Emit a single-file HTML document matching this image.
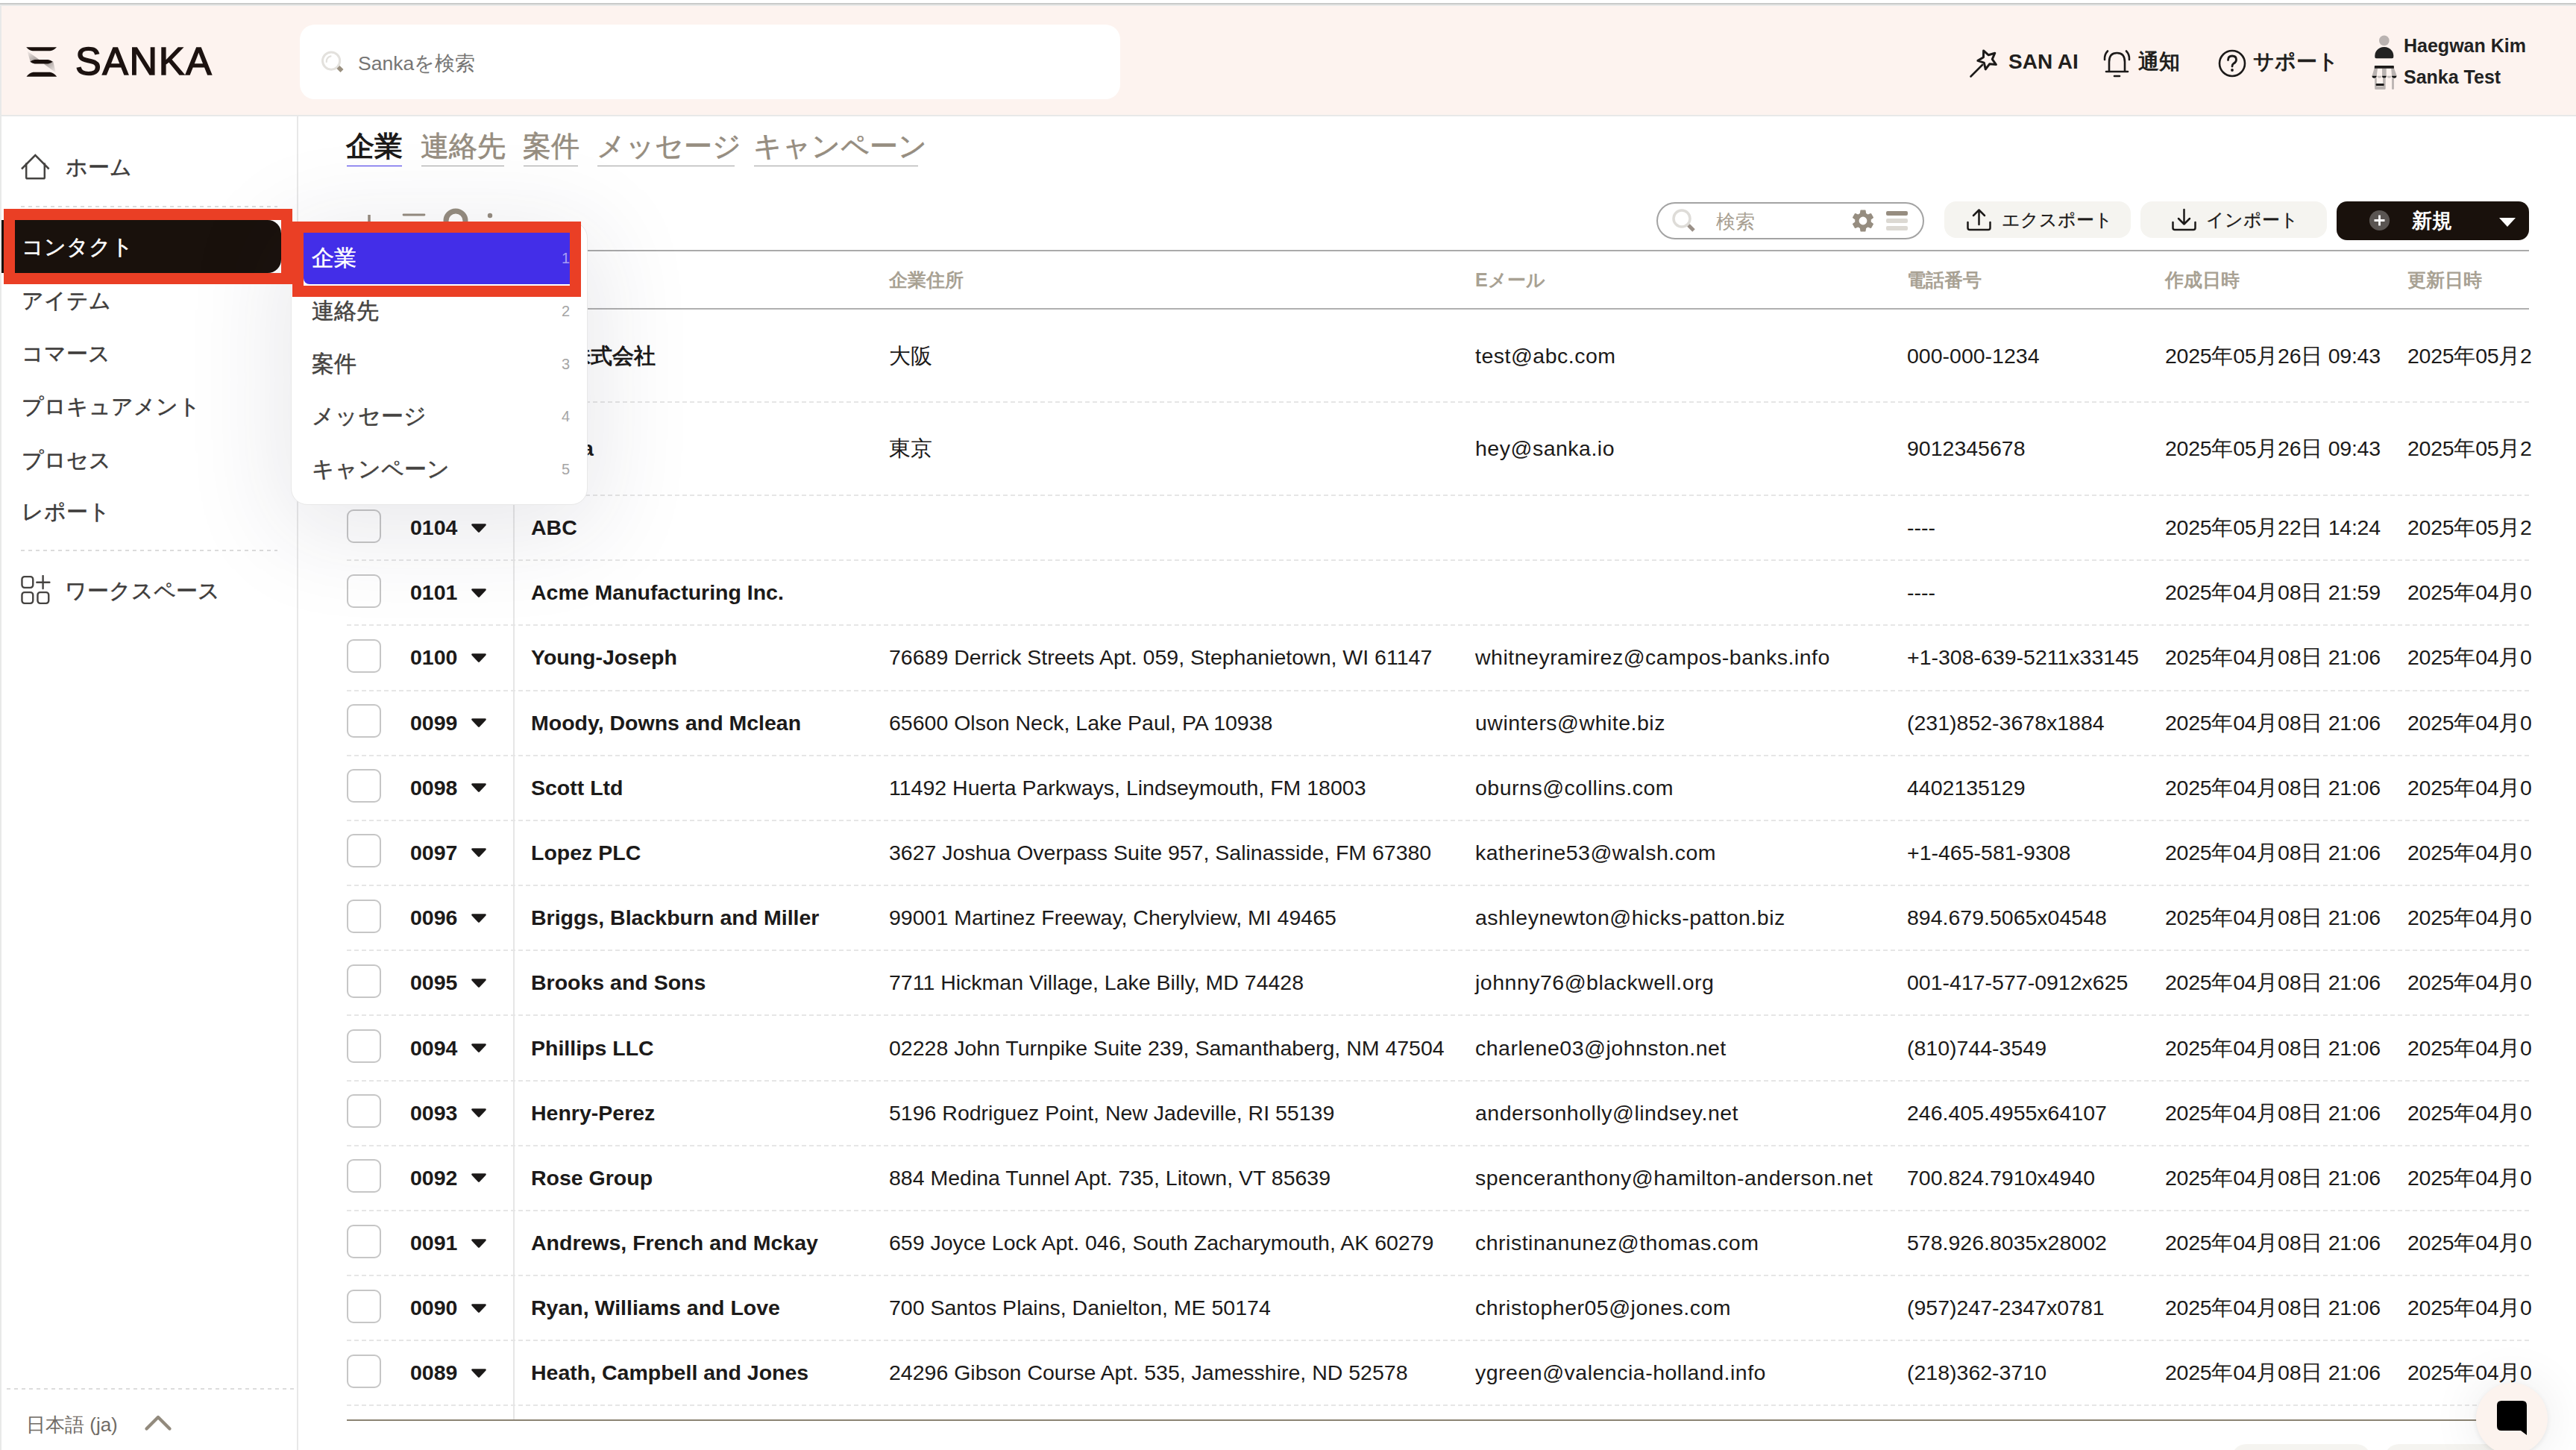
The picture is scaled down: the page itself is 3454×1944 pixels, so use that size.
<!DOCTYPE html>
<html lang="ja"><head><meta charset="utf-8">
<style>
*{box-sizing:border-box;margin:0;padding:0}
html,body{width:3454px;height:1944px;overflow:hidden;background:#fff;font-family:"Liberation Sans",sans-serif;color:#1c1a19}
.a{position:absolute}
.nw{white-space:nowrap}
#topl1{position:absolute;left:0;top:4px;width:3454px;height:2px;background:#c9cac9}
#topl2{position:absolute;left:0;top:6px;width:3454px;height:2px;background:#e8e9e8}
#leftl{position:absolute;left:0;top:6px;width:2px;height:1938px;background:#e8e9e8}
#hdr{position:absolute;left:2px;top:8px;width:3452px;height:146px;background:#fdf3ef}
#hdrb{position:absolute;left:2px;top:154px;width:3452px;height:2px;background:#e8e8e8}
#sbr{position:absolute;left:398px;top:156px;width:2px;height:1788px;background:#e8e8e8}
#search{position:absolute;left:402px;top:33px;width:1100px;height:100px;background:#fff;border-radius:20px}
.ph{position:absolute;left:480px;top:65px;font-size:26.5px;line-height:40px;color:#767574}
.hbtn{position:absolute;font-size:28px;line-height:40px;font-weight:bold;color:#221f1d}
.side{position:absolute;left:29px;font-size:29px;line-height:40px;color:#3e3c3b;-webkit-text-stroke:0.5px currentColor}
.dashH{position:absolute;height:2px;background-image:linear-gradient(to right,#dcdcdc 55%,transparent 55%);background-size:10px 2px}
.tab{position:absolute;top:170px;font-size:38px;line-height:52px;color:#968d80;-webkit-text-stroke:0.6px currentColor}
.tabu{position:absolute;top:221.5px;height:1.2px;background:#9f9f9f}
.th{position:absolute;top:355px;font-size:25px;line-height:40px;font-weight:bold;color:#a8a193}
.tx{position:absolute;font-size:28.5px;line-height:34px;margin-top:-16.5px;white-space:nowrap;color:#1c1a19}
.b{font-weight:bold}
.dt{letter-spacing:-0.25px}
.em{letter-spacing:0.5px}
.num{left:550px}
.cb{position:absolute;left:465px;width:46px;height:45px;border:2.2px solid #c6c6c6;border-radius:9px;background:#fff}
.caret{position:absolute;left:631px}
.dash{position:absolute;left:465px;width:2926px;height:2px;background-image:linear-gradient(to right,#e6e6e6 56%,transparent 56%);background-size:10px 2px}
#tb{position:absolute;left:0;top:0;width:3394px;height:1944px;overflow:hidden}
.btn{position:absolute;top:270px;height:49px;border-radius:16px;background:#f5f4f0}
.btxt{position:absolute;top:275px;font-size:24px;-webkit-text-stroke:0.3px #1c1a19;line-height:40px;color:#1c1a19}
.dd{position:absolute;left:418px;font-size:29.5px;line-height:40px;color:#454341;-webkit-text-stroke:0.5px currentColor}
.ddn{position:absolute;left:753px;font-size:20px;line-height:30px;color:#a5a5a5}
.red{position:absolute;border:15px solid #ea3f25}
</style><script>(function(){var w=window.innerWidth;if(w&&Math.abs(w-3454)>3){document.documentElement.style.zoom=(w/3454);}})();</script>
</head>
<body>
<div id="topl1"></div><div id="topl2"></div><div id="leftl"></div>
<div id="hdr"></div><div id="hdrb"></div>

<!-- logo -->
<svg class="a" style="left:33px;top:60px" width="48" height="46" viewBox="33 60 48 46">
 <defs>
  <linearGradient id="g1" gradientUnits="userSpaceOnUse" x1="37" y1="69" x2="46" y2="82"><stop offset="0" stop-color="#f3ebe8"/><stop offset="1" stop-color="#a9a19e"/></linearGradient>
  <linearGradient id="g2" gradientUnits="userSpaceOnUse" x1="64" y1="84" x2="74" y2="97"><stop offset="0" stop-color="#aaa29f"/><stop offset="1" stop-color="#f3ebe8"/></linearGradient>
 </defs>
 <path d="M36.6 68.6 L40.6 82.4 L53 80.3 Z" fill="url(#g1)"/>
 <path d="M58.5 85.6 L71.3 82.4 L74.8 97.6 Z" fill="url(#g2)"/>
 <path d="M35.2 63.2 H76 Q72 67.6 67.2 68.3 H43.8 Q39 67.6 35.2 63.2 Z" fill="#1a100d"/>
 <path d="M40.3 82.8 Q43 80.6 46.5 80.1 H64.5 Q68 80.6 70.8 82.8 Q68 85 64.5 85.6 H46.5 Q43 85 40.3 82.8 Z" fill="#1a100d"/>
 <path d="M35.5 102.8 H76.2 Q72.5 97.6 67 96.8 H44.5 Q39 97.6 35.5 102.8 Z" fill="#1a100d"/>
</svg>
<div class="a nw" style="left:101px;top:52px;font-size:52px;line-height:60px;letter-spacing:1.6px;-webkit-text-stroke:1.5px #1c1210;color:#1c1210">SANKA</div>

<div id="search"></div>
<svg class="a" style="left:428px;top:66px" width="40" height="40" viewBox="0 0 40 40">
 <circle cx="16.1" cy="15.6" r="11.6" fill="none" stroke="#e3e1dd" stroke-width="3"/>
 <path d="M9.8 17 A7 7 0 0 1 15.5 9.3" stroke="#e3e1dd" stroke-width="2.2" fill="none" stroke-linecap="round"/>
 <path d="M23.5 26 L27.5 22 L32.5 27 L28.5 31 Z" fill="#9a9080"/>
</svg>
<div class="ph nw">Sankaを検索</div>

<!-- header right -->
<svg class="a" style="left:2638px;top:64px" width="44" height="42" viewBox="0 0 44 42">
 <path d="M4.5 38.5 L20 23" stroke="#1c1a19" stroke-width="2.6" stroke-linecap="round"/>
 <path d="M21.6 3.9 L28.3 9.8 L36.8 7.2 L33.3 15.3 L38.4 22.6 L29.6 21.8 L24.3 28.9 L22.3 20.2 L13.9 17.4 L21.5 12.8 Z" fill="none" stroke="#1c1a19" stroke-width="3" stroke-linejoin="round"/>
</svg>
<div class="hbtn nw" style="left:2693px;top:63px">SAN AI</div>
<svg class="a" style="left:2819px;top:65px" width="42" height="42" viewBox="0 0 42 42">
 <path d="M9 31 V18 Q9 6 19.5 6 Q30 6 30 18 V31" fill="none" stroke="#1c1a19" stroke-width="2.6"/>
 <path d="M5 31 H34" stroke="#1c1a19" stroke-width="2.6" stroke-linecap="round"/>
 <path d="M16 37 H23" stroke="#1c1a19" stroke-width="2.6" stroke-linecap="round"/>
 <path d="M7 3.5 Q2.5 8 3 15" fill="none" stroke="#1c1a19" stroke-width="2.6" stroke-linecap="round"/>
 <path d="M32 3.5 Q36.5 8 36 15" fill="none" stroke="#1c1a19" stroke-width="2.6" stroke-linecap="round"/>
</svg>
<div class="hbtn nw" style="left:2867px;top:63px">通知</div>
<svg class="a" style="left:2973px;top:65px" width="40" height="40" viewBox="0 0 40 40">
 <circle cx="20" cy="20" r="17" fill="none" stroke="#1c1a19" stroke-width="2.6"/>
 <path d="M14.5 15.5 Q14.5 10 20 10 Q25.5 10 25.5 15 Q25.5 18.5 21.5 20.5 Q20 21.5 20 24" fill="none" stroke="#1c1a19" stroke-width="2.8" stroke-linecap="round"/>
 <circle cx="20" cy="29" r="1.9" fill="#1c1a19"/>
</svg>
<div class="hbtn nw" style="left:3021px;top:63px">サポート</div>
<svg class="a" style="left:3178px;top:44px" width="40" height="40" viewBox="3178 44 40 40">
 <circle cx="3196.8" cy="54.4" r="6.8" fill="#bab3b1"/>
 <path d="M3184.5 77.5 Q3183.5 72 3186.5 68 Q3190.5 63 3196.8 63 Q3203.1 63 3207.1 68 Q3210.1 72 3209.1 77.5 Q3208.5 78.2 3207 78.2 H3186.6 Q3185 78.2 3184.5 77.5 Z" fill="#222"/>
</svg>
<svg class="a" style="left:3178px;top:86px" width="40" height="36" viewBox="3178 86 40 36">
 <path d="M3183.6 91.6 H3188 L3186.7 102 H3180.5 Z" fill="#bab3b1"/>
 <path d="M3194 91.6 H3199.7 V102 H3194 Z" fill="#bab3b1"/>
 <path d="M3206.2 91.6 H3210 L3213.8 102 H3207 Z" fill="#bab3b1"/>
 <path d="M3184.6 88.1 H3209.1 Q3209.9 88.1 3209.9 89 V91.7 H3183.8 V89 Q3183.8 88.1 3184.6 88.1 Z" fill="#1c1a19"/>
 <path d="M3180.5 101.8 H3186.7 Q3186.7 104.8 3183.6 104.8 Q3180.5 104.8 3180.5 101.8 Z" fill="#111"/>
 <path d="M3194 101.8 H3199.7 Q3199.7 104.8 3196.85 104.8 Q3194 104.8 3194 101.8 Z" fill="#111"/>
 <path d="M3207 101.8 H3213.4 Q3213.4 104.8 3210.2 104.8 Q3207 104.8 3207 101.8 Z" fill="#111"/>
 <path d="M3187.5 101.8 H3193.5 Q3193.5 104.6 3190.5 104.6 Q3187.5 104.6 3187.5 101.8 Z" fill="#c4bebc"/>
 <path d="M3200.5 101.8 H3206.4 Q3206.4 104.6 3203.45 104.6 Q3200.5 104.6 3200.5 101.8 Z" fill="#c4bebc"/>
 <path d="M3184.1 104.5 H3186.8 V115.5 H3195 V104.5 H3198.7 V118.4 Q3198.7 120 3197.1 120 H3185.7 Q3184.1 120 3184.1 118.4 Z" fill="#bab3b1"/>
 <rect x="3185.6" y="112.1" width="11.1" height="2.8" rx="1.2" fill="#1c1a19"/>
 <rect x="3207.1" y="104.5" width="2.8" height="15.5" rx="1.3" fill="#bab3b1"/>
</svg>
<div class="a nw" style="left:3223px;top:45px;font-size:25px;line-height:32px;font-weight:bold;color:#222">Haegwan Kim</div>
<div class="a nw" style="left:3223px;top:87px;font-size:25px;line-height:32px;font-weight:bold;color:#222">Sanka Test</div>

<!-- sidebar -->
<div id="sbr"></div>
<svg class="a" style="left:26px;top:204px" width="44" height="40" viewBox="0 0 44 40">
 <path d="M3 22.5 L21.3 4 L39.6 22.5" fill="none" stroke="#454341" stroke-width="2.5"/><path d="M9.2 14.5 V34 Q9.2 35.3 10.5 35.3 H32.5 Q33.8 35.3 33.8 34 V14.5" fill="none" stroke="#454341" stroke-width="2.5"/>
</svg>
<div class="side nw" style="left:88px;top:204px">ホーム</div>
<div class="dashH" style="left:28px;top:276px;width:344px"></div>
<div class="a" style="left:2px;top:295px;width:375px;height:71px;background:#19110c;border-radius:0 18px 18px 0"></div>
<div class="side nw" style="left:29px;top:311px;color:#fff">コンタクト</div>
<div class="side nw" style="top:383px">アイテム</div>
<div class="side nw" style="top:454px">コマース</div>
<div class="side nw" style="top:525px">プロキュアメント</div>
<div class="side nw" style="top:597px">プロセス</div>
<div class="side nw" style="top:666px">レポート</div>
<div class="dashH" style="left:28px;top:737px;width:344px"></div>
<svg class="a" style="left:26px;top:771px" width="44" height="42" viewBox="0 0 44 42">
 <rect x="3.45" y="2.15" width="14.8" height="14.7" rx="3.5" fill="none" stroke="#454341" stroke-width="2.4"/>
 <rect x="3.45" y="23.15" width="14.8" height="14.7" rx="3.5" fill="none" stroke="#454341" stroke-width="2.4"/>
 <rect x="24.45" y="23.15" width="14.8" height="14.7" rx="3.5" fill="none" stroke="#454341" stroke-width="2.4"/>
 <path d="M31.6 1 V18 M23.3 9.8 H40.4" stroke="#454341" stroke-width="2.4" stroke-linecap="round"/>
</svg>
<div class="side nw" style="left:87px;top:772px">ワークスペース</div>
<div class="dashH" style="left:9px;top:1861px;width:387px"></div>
<div class="a nw" style="left:35px;top:1890px;font-size:26px;line-height:40px;color:#716c66">日本語 (ja)</div>
<svg class="a" style="left:192px;top:1895px" width="40" height="26" viewBox="0 0 40 26">
 <path d="M4.5 20.5 L20 5 L35.5 20.5" fill="none" stroke="#928a7d" stroke-width="4.3" stroke-linecap="round" stroke-linejoin="round"/>
</svg>

<!-- tabs -->
<div class="tab nw" style="left:464px;color:#1c1a19;font-weight:bold;-webkit-text-stroke:0">企業</div>
<div class="tabu" style="left:465px;width:74px;background:#3b2ce6"></div>
<div class="tab nw" style="left:564px">連絡先</div>
<div class="tabu" style="left:565px;width:111px"></div>
<div class="tab nw" style="left:701px">案件</div>
<div class="tabu" style="left:702px;width:73px"></div>
<div class="tab nw" style="left:800px">メッセージ</div>
<div class="tabu" style="left:801px;width:184px"></div>
<div class="tab nw" style="left:1010px">キャンペーン</div>
<div class="tabu" style="left:1011px;width:220px"></div>

<!-- toolbar left icons -->
<svg class="a" style="left:470px;top:270px" width="210" height="50" viewBox="470 270 210 50">
 <path d="M495 288 V320 M479 304 H511" stroke="#968d80" stroke-width="3.5"/>
 <path d="M541 288 H569 M541 302 H569 M541 316 H569" stroke="#968d80" stroke-width="2.8" stroke-linecap="round"/>
 <circle cx="611" cy="296" r="13" fill="none" stroke="#968d80" stroke-width="7"/>
 <circle cx="657" cy="289" r="3.2" fill="#968d80"/>
 <circle cx="657" cy="302" r="3.2" fill="#968d80"/>
</svg>

<!-- toolbar right -->
<div class="a" style="left:2221px;top:271px;width:359px;height:50px;border:2px solid #a3a3a3;border-radius:25px"></div>
<svg class="a" style="left:2240px;top:278px" width="38" height="38" viewBox="0 0 38 38">
 <circle cx="15" cy="15" r="11" fill="none" stroke="#dedcd8" stroke-width="3.5"/>
 <path d="M24 24 L31 31" stroke="#9a9088" stroke-width="5"/>
</svg>
<div class="a nw" style="left:2301px;top:277px;font-size:26px;line-height:40px;color:#a89f92">検索</div>
<svg class="a" style="left:2480px;top:278px" width="36" height="36" viewBox="0 0 24 24">
 <path fill="#968d80" d="M19.14 12.94c.04-.3.06-.61.06-.94s-.02-.64-.07-.94l2.03-1.58a.49.49 0 0 0 .12-.61l-1.92-3.32a.49.49 0 0 0-.59-.22l-2.39.96c-.5-.38-1.03-.7-1.62-.94l-.36-2.54a.48.48 0 0 0-.48-.41h-3.84a.48.48 0 0 0-.47.41l-.36 2.54c-.59.24-1.13.57-1.62.94l-2.39-.96a.48.48 0 0 0-.59.22L2.74 8.87a.47.47 0 0 0 .12.61l2.03 1.58c-.05.3-.09.63-.09.94s.02.64.07.94l-2.03 1.58a.49.49 0 0 0-.12.61l1.92 3.32c.12.22.37.29.59.22l2.39-.96c.5.38 1.03.7 1.62.94l.36 2.54c.05.24.24.41.48.41h3.84c.24 0 .44-.17.47-.41l.36-2.54c.59-.24 1.13-.56 1.62-.94l2.39.96c.22.08.47 0 .59-.22l1.92-3.32c.12-.22.07-.47-.12-.61l-2.01-1.58zM12 15.6A3.6 3.6 0 1 1 12 8.4a3.6 3.6 0 0 1 0 7.2z"/>
</svg>
<div class="a" style="left:2529px;top:283px;width:29px;height:6px;border-radius:2px;background:#968d80"></div>
<div class="a" style="left:2529px;top:293px;width:29px;height:6px;border-radius:2px;background:#dcd9d3"></div>
<div class="a" style="left:2529px;top:303px;width:29px;height:6px;border-radius:2px;background:#dcd9d3"></div>

<div class="btn" style="left:2607px;width:250px"></div>
<svg class="a" style="left:2634px;top:277px" width="38" height="36" viewBox="0 0 38 36">
 <path d="M4.5 21 V28.5 Q4.5 31 7 31 H32 Q34.5 31 34.5 28.5 V21" fill="none" stroke="#1c1a19" stroke-width="2.5" stroke-linecap="round"/>
 <path d="M19.5 24 V4.5 M12 12 L19.5 4.5 L27 12" fill="none" stroke="#1c1a19" stroke-width="2.5" stroke-linecap="round" stroke-linejoin="round"/>
</svg>
<div class="btxt nw" style="left:2684px">エクスポート</div>
<div class="btn" style="left:2870px;width:250px"></div>
<svg class="a" style="left:2909px;top:277px" width="38" height="36" viewBox="0 0 38 36">
 <path d="M4.5 21 V28.5 Q4.5 31 7 31 H32 Q34.5 31 34.5 28.5 V21" fill="none" stroke="#1c1a19" stroke-width="2.5" stroke-linecap="round"/>
 <path d="M19.5 4 V23.5 M12 16 L19.5 23.5 L27 16" fill="none" stroke="#1c1a19" stroke-width="2.5" stroke-linecap="round" stroke-linejoin="round"/>
</svg>
<div class="btxt nw" style="left:2958px">インポート</div>
<div class="a" style="left:3133px;top:270px;width:258px;height:52px;border-radius:14px;background:#19110c"></div>
<svg class="a" style="left:3175px;top:280px" width="32" height="32" viewBox="0 0 32 32">
 <circle cx="15.5" cy="15.5" r="13.6" fill="#5a5552"/>
 <path d="M15.5 8.5 V22.5 M8.5 15.5 H22.5" stroke="#fff" stroke-width="2.8"/>
</svg>
<div class="a nw" style="left:3234px;top:276px;font-size:27px;line-height:40px;font-weight:bold;color:#fff">新規</div>
<div class="a" style="left:3351px;top:292px;width:0;height:0;border-left:11px solid transparent;border-right:11px solid transparent;border-top:12px solid #fff"></div>

<!-- table -->
<div class="a" style="left:465px;top:335px;width:2926px;height:2px;background:#aaaaaa"></div>
<div class="a" style="left:465px;top:413px;width:2926px;height:2px;background:#b0b0b0"></div>
<div class="a" style="left:688px;top:415px;width:2px;height:1488px;background:#e6e6e6"></div>
<div class="th nw" style="left:712px">企業名</div>
<div class="th nw" style="left:1192px">企業住所</div>
<div class="th nw" style="left:1978px">Eメール</div>
<div class="th nw" style="left:2557px">電話番号</div>
<div class="th nw" style="left:2903px">作成日時</div>
<div class="th nw" style="left:3228px">更新日時</div>
<div id="tb">
<div class="cb" style="top:452.0px"></div>
<div class="tx b num" style="top:476.0px">0105</div>
<svg class="caret" style="top:470.0px" width="22" height="14" viewBox="0 0 22 14"><path d="M2.5 2.5 H19.5 L11 11.5 Z" fill="#1c1a19" stroke="#1c1a19" stroke-width="2.6" stroke-linejoin="round"/></svg>
<div class="tx b" style="left:701px;top:476.0px">ABC株式会社</div>
<div class="tx" style="left:1192px;top:476.0px">大阪</div>
<div class="tx em" style="left:1978px;top:476.0px">test@abc.com</div>
<div class="tx" style="left:2557px;top:476.0px">000-000-1234</div>
<div class="tx dt" style="left:2903px;top:476.0px">2025年05月26日 09:43</div>
<div class="tx dt" style="left:3228px;top:476.0px">2025年05月26日 09:43</div>
<div class="dash" style="top:538.0px"></div>
<div class="cb" style="top:576.5px"></div>
<div class="tx b num" style="top:600.5px">0103</div>
<svg class="caret" style="top:594.5px" width="22" height="14" viewBox="0 0 22 14"><path d="M2.5 2.5 H19.5 L11 11.5 Z" fill="#1c1a19" stroke="#1c1a19" stroke-width="2.6" stroke-linejoin="round"/></svg>
<div class="tx b" style="left:712px;top:600.5px">Sanka</div>
<div class="tx" style="left:1192px;top:600.5px">東京</div>
<div class="tx em" style="left:1978px;top:600.5px">hey@sanka.io</div>
<div class="tx" style="left:2557px;top:600.5px">9012345678</div>
<div class="tx dt" style="left:2903px;top:600.5px">2025年05月26日 09:43</div>
<div class="tx dt" style="left:3228px;top:600.5px">2025年05月26日 09:43</div>
<div class="dash" style="top:663.0px"></div>
<div class="cb" style="top:682.6px"></div>
<div class="tx b num" style="top:706.6px">0104</div>
<svg class="caret" style="top:700.6px" width="22" height="14" viewBox="0 0 22 14"><path d="M2.5 2.5 H19.5 L11 11.5 Z" fill="#1c1a19" stroke="#1c1a19" stroke-width="2.6" stroke-linejoin="round"/></svg>
<div class="tx b" style="left:712px;top:706.6px">ABC</div>
<div class="tx" style="left:2557px;top:706.6px">----</div>
<div class="tx dt" style="left:2903px;top:706.6px">2025年05月22日 14:24</div>
<div class="tx dt" style="left:3228px;top:706.6px">2025年05月22日 14:24</div>
<div class="dash" style="top:750.2px"></div>
<div class="cb" style="top:769.8px"></div>
<div class="tx b num" style="top:793.8px">0101</div>
<svg class="caret" style="top:787.8px" width="22" height="14" viewBox="0 0 22 14"><path d="M2.5 2.5 H19.5 L11 11.5 Z" fill="#1c1a19" stroke="#1c1a19" stroke-width="2.6" stroke-linejoin="round"/></svg>
<div class="tx b" style="left:712px;top:793.8px">Acme Manufacturing Inc.</div>
<div class="tx" style="left:2557px;top:793.8px">----</div>
<div class="tx dt" style="left:2903px;top:793.8px">2025年04月08日 21:59</div>
<div class="tx dt" style="left:3228px;top:793.8px">2025年04月08日 21:59</div>
<div class="dash" style="top:837.3px"></div>
<div class="cb" style="top:856.9px"></div>
<div class="tx b num" style="top:880.9px">0100</div>
<svg class="caret" style="top:874.9px" width="22" height="14" viewBox="0 0 22 14"><path d="M2.5 2.5 H19.5 L11 11.5 Z" fill="#1c1a19" stroke="#1c1a19" stroke-width="2.6" stroke-linejoin="round"/></svg>
<div class="tx b" style="left:712px;top:880.9px">Young-Joseph</div>
<div class="tx" style="left:1192px;top:880.9px">76689 Derrick Streets Apt. 059, Stephanietown, WI 61147</div>
<div class="tx em" style="left:1978px;top:880.9px">whitneyramirez@campos-banks.info</div>
<div class="tx" style="left:2557px;top:880.9px">+1-308-639-5211x33145</div>
<div class="tx dt" style="left:2903px;top:880.9px">2025年04月08日 21:06</div>
<div class="tx dt" style="left:3228px;top:880.9px">2025年04月08日 21:06</div>
<div class="dash" style="top:924.5px"></div>
<div class="cb" style="top:944.1px"></div>
<div class="tx b num" style="top:968.1px">0099</div>
<svg class="caret" style="top:962.1px" width="22" height="14" viewBox="0 0 22 14"><path d="M2.5 2.5 H19.5 L11 11.5 Z" fill="#1c1a19" stroke="#1c1a19" stroke-width="2.6" stroke-linejoin="round"/></svg>
<div class="tx b" style="left:712px;top:968.1px">Moody, Downs and Mclean</div>
<div class="tx" style="left:1192px;top:968.1px">65600 Olson Neck, Lake Paul, PA 10938</div>
<div class="tx em" style="left:1978px;top:968.1px">uwinters@white.biz</div>
<div class="tx" style="left:2557px;top:968.1px">(231)852-3678x1884</div>
<div class="tx dt" style="left:2903px;top:968.1px">2025年04月08日 21:06</div>
<div class="tx dt" style="left:3228px;top:968.1px">2025年04月08日 21:06</div>
<div class="dash" style="top:1011.7px"></div>
<div class="cb" style="top:1031.2px"></div>
<div class="tx b num" style="top:1055.2px">0098</div>
<svg class="caret" style="top:1049.2px" width="22" height="14" viewBox="0 0 22 14"><path d="M2.5 2.5 H19.5 L11 11.5 Z" fill="#1c1a19" stroke="#1c1a19" stroke-width="2.6" stroke-linejoin="round"/></svg>
<div class="tx b" style="left:712px;top:1055.2px">Scott Ltd</div>
<div class="tx" style="left:1192px;top:1055.2px">11492 Huerta Parkways, Lindseymouth, FM 18003</div>
<div class="tx em" style="left:1978px;top:1055.2px">oburns@collins.com</div>
<div class="tx" style="left:2557px;top:1055.2px">4402135129</div>
<div class="tx dt" style="left:2903px;top:1055.2px">2025年04月08日 21:06</div>
<div class="tx dt" style="left:3228px;top:1055.2px">2025年04月08日 21:06</div>
<div class="dash" style="top:1098.8px"></div>
<div class="cb" style="top:1118.4px"></div>
<div class="tx b num" style="top:1142.4px">0097</div>
<svg class="caret" style="top:1136.4px" width="22" height="14" viewBox="0 0 22 14"><path d="M2.5 2.5 H19.5 L11 11.5 Z" fill="#1c1a19" stroke="#1c1a19" stroke-width="2.6" stroke-linejoin="round"/></svg>
<div class="tx b" style="left:712px;top:1142.4px">Lopez PLC</div>
<div class="tx" style="left:1192px;top:1142.4px">3627 Joshua Overpass Suite 957, Salinasside, FM 67380</div>
<div class="tx em" style="left:1978px;top:1142.4px">katherine53@walsh.com</div>
<div class="tx" style="left:2557px;top:1142.4px">+1-465-581-9308</div>
<div class="tx dt" style="left:2903px;top:1142.4px">2025年04月08日 21:06</div>
<div class="tx dt" style="left:3228px;top:1142.4px">2025年04月08日 21:06</div>
<div class="dash" style="top:1186.0px"></div>
<div class="cb" style="top:1205.6px"></div>
<div class="tx b num" style="top:1229.6px">0096</div>
<svg class="caret" style="top:1223.6px" width="22" height="14" viewBox="0 0 22 14"><path d="M2.5 2.5 H19.5 L11 11.5 Z" fill="#1c1a19" stroke="#1c1a19" stroke-width="2.6" stroke-linejoin="round"/></svg>
<div class="tx b" style="left:712px;top:1229.6px">Briggs, Blackburn and Miller</div>
<div class="tx" style="left:1192px;top:1229.6px">99001 Martinez Freeway, Cherylview, MI 49465</div>
<div class="tx em" style="left:1978px;top:1229.6px">ashleynewton@hicks-patton.biz</div>
<div class="tx" style="left:2557px;top:1229.6px">894.679.5065x04548</div>
<div class="tx dt" style="left:2903px;top:1229.6px">2025年04月08日 21:06</div>
<div class="tx dt" style="left:3228px;top:1229.6px">2025年04月08日 21:06</div>
<div class="dash" style="top:1273.2px"></div>
<div class="cb" style="top:1292.8px"></div>
<div class="tx b num" style="top:1316.8px">0095</div>
<svg class="caret" style="top:1310.8px" width="22" height="14" viewBox="0 0 22 14"><path d="M2.5 2.5 H19.5 L11 11.5 Z" fill="#1c1a19" stroke="#1c1a19" stroke-width="2.6" stroke-linejoin="round"/></svg>
<div class="tx b" style="left:712px;top:1316.8px">Brooks and Sons</div>
<div class="tx" style="left:1192px;top:1316.8px">7711 Hickman Village, Lake Billy, MD 74428</div>
<div class="tx em" style="left:1978px;top:1316.8px">johnny76@blackwell.org</div>
<div class="tx" style="left:2557px;top:1316.8px">001-417-577-0912x625</div>
<div class="tx dt" style="left:2903px;top:1316.8px">2025年04月08日 21:06</div>
<div class="tx dt" style="left:3228px;top:1316.8px">2025年04月08日 21:06</div>
<div class="dash" style="top:1360.4px"></div>
<div class="cb" style="top:1380.0px"></div>
<div class="tx b num" style="top:1404.0px">0094</div>
<svg class="caret" style="top:1398.0px" width="22" height="14" viewBox="0 0 22 14"><path d="M2.5 2.5 H19.5 L11 11.5 Z" fill="#1c1a19" stroke="#1c1a19" stroke-width="2.6" stroke-linejoin="round"/></svg>
<div class="tx b" style="left:712px;top:1404.0px">Phillips LLC</div>
<div class="tx" style="left:1192px;top:1404.0px">02228 John Turnpike Suite 239, Samanthaberg, NM 47504</div>
<div class="tx em" style="left:1978px;top:1404.0px">charlene03@johnston.net</div>
<div class="tx" style="left:2557px;top:1404.0px">(810)744-3549</div>
<div class="tx dt" style="left:2903px;top:1404.0px">2025年04月08日 21:06</div>
<div class="tx dt" style="left:3228px;top:1404.0px">2025年04月08日 21:06</div>
<div class="dash" style="top:1447.5px"></div>
<div class="cb" style="top:1467.1px"></div>
<div class="tx b num" style="top:1491.1px">0093</div>
<svg class="caret" style="top:1485.1px" width="22" height="14" viewBox="0 0 22 14"><path d="M2.5 2.5 H19.5 L11 11.5 Z" fill="#1c1a19" stroke="#1c1a19" stroke-width="2.6" stroke-linejoin="round"/></svg>
<div class="tx b" style="left:712px;top:1491.1px">Henry-Perez</div>
<div class="tx" style="left:1192px;top:1491.1px">5196 Rodriguez Point, New Jadeville, RI 55139</div>
<div class="tx em" style="left:1978px;top:1491.1px">andersonholly@lindsey.net</div>
<div class="tx" style="left:2557px;top:1491.1px">246.405.4955x64107</div>
<div class="tx dt" style="left:2903px;top:1491.1px">2025年04月08日 21:06</div>
<div class="tx dt" style="left:3228px;top:1491.1px">2025年04月08日 21:06</div>
<div class="dash" style="top:1534.7px"></div>
<div class="cb" style="top:1554.3px"></div>
<div class="tx b num" style="top:1578.3px">0092</div>
<svg class="caret" style="top:1572.3px" width="22" height="14" viewBox="0 0 22 14"><path d="M2.5 2.5 H19.5 L11 11.5 Z" fill="#1c1a19" stroke="#1c1a19" stroke-width="2.6" stroke-linejoin="round"/></svg>
<div class="tx b" style="left:712px;top:1578.3px">Rose Group</div>
<div class="tx" style="left:1192px;top:1578.3px">884 Medina Tunnel Apt. 735, Litown, VT 85639</div>
<div class="tx em" style="left:1978px;top:1578.3px">spenceranthony@hamilton-anderson.net</div>
<div class="tx" style="left:2557px;top:1578.3px">700.824.7910x4940</div>
<div class="tx dt" style="left:2903px;top:1578.3px">2025年04月08日 21:06</div>
<div class="tx dt" style="left:3228px;top:1578.3px">2025年04月08日 21:06</div>
<div class="dash" style="top:1621.9px"></div>
<div class="cb" style="top:1641.5px"></div>
<div class="tx b num" style="top:1665.5px">0091</div>
<svg class="caret" style="top:1659.5px" width="22" height="14" viewBox="0 0 22 14"><path d="M2.5 2.5 H19.5 L11 11.5 Z" fill="#1c1a19" stroke="#1c1a19" stroke-width="2.6" stroke-linejoin="round"/></svg>
<div class="tx b" style="left:712px;top:1665.5px">Andrews, French and Mckay</div>
<div class="tx" style="left:1192px;top:1665.5px">659 Joyce Lock Apt. 046, South Zacharymouth, AK 60279</div>
<div class="tx em" style="left:1978px;top:1665.5px">christinanunez@thomas.com</div>
<div class="tx" style="left:2557px;top:1665.5px">578.926.8035x28002</div>
<div class="tx dt" style="left:2903px;top:1665.5px">2025年04月08日 21:06</div>
<div class="tx dt" style="left:3228px;top:1665.5px">2025年04月08日 21:06</div>
<div class="dash" style="top:1709.0px"></div>
<div class="cb" style="top:1728.6px"></div>
<div class="tx b num" style="top:1752.6px">0090</div>
<svg class="caret" style="top:1746.6px" width="22" height="14" viewBox="0 0 22 14"><path d="M2.5 2.5 H19.5 L11 11.5 Z" fill="#1c1a19" stroke="#1c1a19" stroke-width="2.6" stroke-linejoin="round"/></svg>
<div class="tx b" style="left:712px;top:1752.6px">Ryan, Williams and Love</div>
<div class="tx" style="left:1192px;top:1752.6px">700 Santos Plains, Danielton, ME 50174</div>
<div class="tx em" style="left:1978px;top:1752.6px">christopher05@jones.com</div>
<div class="tx" style="left:2557px;top:1752.6px">(957)247-2347x0781</div>
<div class="tx dt" style="left:2903px;top:1752.6px">2025年04月08日 21:06</div>
<div class="tx dt" style="left:3228px;top:1752.6px">2025年04月08日 21:06</div>
<div class="dash" style="top:1796.2px"></div>
<div class="cb" style="top:1815.8px"></div>
<div class="tx b num" style="top:1839.8px">0089</div>
<svg class="caret" style="top:1833.8px" width="22" height="14" viewBox="0 0 22 14"><path d="M2.5 2.5 H19.5 L11 11.5 Z" fill="#1c1a19" stroke="#1c1a19" stroke-width="2.6" stroke-linejoin="round"/></svg>
<div class="tx b" style="left:712px;top:1839.8px">Heath, Campbell and Jones</div>
<div class="tx" style="left:1192px;top:1839.8px">24296 Gibson Course Apt. 535, Jamesshire, ND 52578</div>
<div class="tx em" style="left:1978px;top:1839.8px">ygreen@valencia-holland.info</div>
<div class="tx" style="left:2557px;top:1839.8px">(218)362-3710</div>
<div class="tx dt" style="left:2903px;top:1839.8px">2025年04月08日 21:06</div>
<div class="tx dt" style="left:3228px;top:1839.8px">2025年04月08日 21:06</div>
<div class="dash" style="top:1883.4px"></div>
</div>
<div class="a" style="left:465px;top:1903px;width:2926px;height:2px;background:#8b8373"></div>

<!-- pagination hint -->
<div class="a" style="left:2992px;top:1936px;width:187px;height:40px;border-radius:20px;background:#f5f4f0"></div>
<div class="a" style="left:3197px;top:1936px;width:186px;height:40px;border-radius:20px;background:#f5f4f0"></div>

<!-- chat bubble -->
<div class="a" style="left:3320px;top:1854px;width:96px;height:96px;border-radius:50%;background:#fcf3ee;box-shadow:0 2px 6px rgba(0,0,0,0.08),0 0 60px 10px rgba(0,0,0,0.06)"></div>
<svg class="a" style="left:3346px;top:1876px" width="46" height="52" viewBox="0 0 46 52">
 <path d="M8 2 H36 Q42 2 42 8 V48 L34 42 H8 Q2 42 2 36 V8 Q2 2 8 2 Z" fill="#000"/>
</svg>

<!-- dropdown -->
<div class="a" style="left:390px;top:297px;width:398px;height:380px;background:#fff;border:1.5px solid #e8e8e8;border-radius:22px;box-shadow:0 24px 130px 16px rgba(40,40,70,0.10)"></div>
<div class="a" style="left:407px;top:312px;width:357px;height:69px;background:#432ee8;border-radius:0 0 0 8px"></div>
<div class="a" style="left:407px;top:381px;width:357px;height:3px;background:#fff"></div>
<div class="dd nw" style="top:326px;color:#fff">企業</div>
<div class="ddn nw" style="top:331px;color:#a89ef5">1</div>
<div class="dd nw" style="top:397px">連絡先</div>
<div class="ddn nw" style="top:402px">2</div>
<div class="dd nw" style="top:468px">案件</div>
<div class="ddn nw" style="top:473px">3</div>
<div class="dd nw" style="top:538px">メッセージ</div>
<div class="ddn nw" style="top:543px">4</div>
<div class="dd nw" style="top:609px">キャンペーン</div>
<div class="ddn nw" style="top:614px">5</div>
<div class="red" style="left:392px;top:297px;width:387px;height:101px"></div>
<div class="red" style="left:5px;top:280px;width:387px;height:101px"></div>


</body></html>
